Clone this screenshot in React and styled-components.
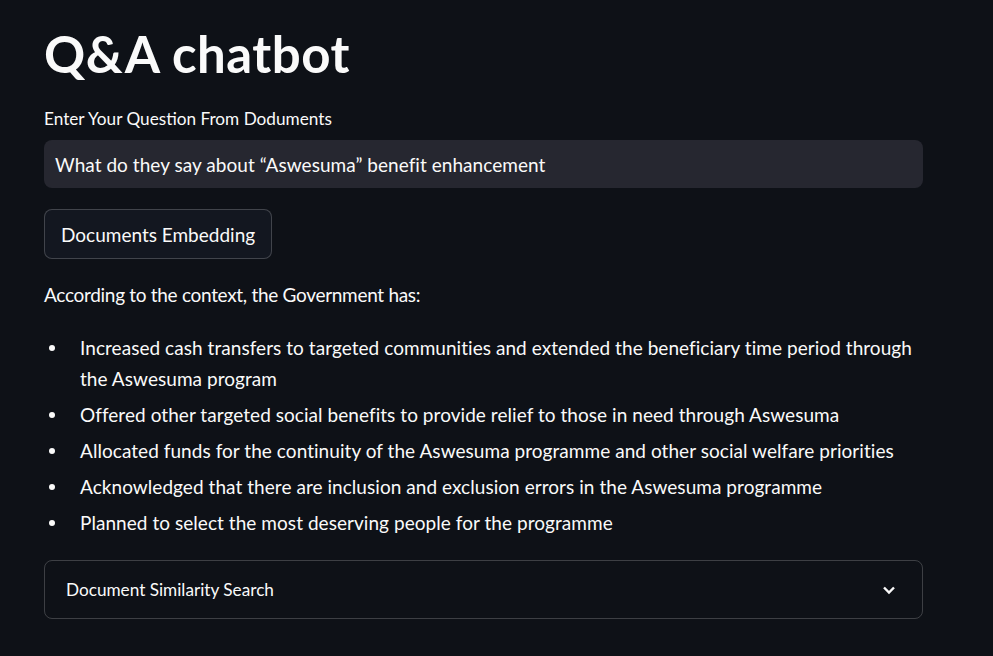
import styled, { createGlobalStyle } from "styled-components";

const GlobalStyle = createGlobalStyle`
  html, body {
    margin: 0;
    padding: 0;
    background: #0e1117;
    color: #fafafa;
    font-family: "Source Sans Pro", Lato, "Noto Sans", sans-serif;
  }
`;

const Page = styled.div`
  min-height: 656px;
  background: #0e1117;
  padding: 23px 0 0 44px;
  box-sizing: border-box;
`;

const Main = styled.div`
  width: 879px;
  display: flex;
  flex-direction: column;
`;

const Title = styled.h1`
  margin: 0;
  font-size: 51px;
  font-weight: 700;
  line-height: 62px;
  letter-spacing: 0.5px;
`;

const Label = styled.label`
  margin-top: 23px;
  font-size: 17.2px;
  line-height: 22px;
`;

const Input = styled.div`
  margin-top: 10px;
  height: 48px;
  border-radius: 8px;
  background: #262730;
  display: flex;
  align-items: center;
  padding: 0 11px;
  font-size: 19px;
  letter-spacing: 0.05px;
`;

const Button = styled.button`
  align-self: flex-start;
  margin-top: 21px;
  height: 50px;
  padding: 0 16px;
  border-radius: 8px;
  background: #131720;
  border: 1px solid rgba(250, 250, 250, 0.2);
  color: #fafafa;
  font-family: inherit;
  font-size: 19px;
`;

const Text = styled.p`
  margin: 20px 0 0;
  font-size: 19px;
  line-height: 31px;
  letter-spacing: -0.3px;
`;

const List = styled.ul`
  margin: 22px 0 0;
  padding: 0;
  list-style: none;
`;

const Item = styled.li`
  display: grid;
  grid-template-columns: 36px 1fr;
  font-size: 19px;
  line-height: 31px;
  letter-spacing: 0.05px;
  margin-bottom: 5px;
  &::before {
    content: "";
    width: 6px;
    height: 6px;
    border-radius: 50%;
    background: #fafafa;
    margin: 13px 0 0 5px;
  }
`;

const Expander = styled.div`
  margin-top: 17px;
  height: 59px;
  border: 1px solid rgba(250, 250, 250, 0.2);
  border-radius: 8px;
  display: flex;
  align-items: center;
  justify-content: space-between;
  padding: 0 26px 0 21px;
  box-sizing: border-box;
  font-size: 17.2px;
`;

const Chevron = () => (
  <svg width="14" height="10" viewBox="0 0 14 10">
    <polyline points="2,2.5 7,7.5 12,2.5" fill="none" stroke="#fafafa" strokeWidth="2.4" />
  </svg>
);

const items = [
  "Increased cash transfers to targeted communities and extended the beneficiary time period through the Aswesuma program",
  "Offered other targeted social benefits to provide relief to those in need through Aswesuma",
  "Allocated funds for the continuity of the Aswesuma programme and other social welfare priorities",
  "Acknowledged that there are inclusion and exclusion errors in the Aswesuma programme",
  "Planned to select the most deserving people for the programme",
];

const App = () => (
  <Page>
    <GlobalStyle />
    <Main>
      <Title>Q&amp;A chatbot</Title>
      <Label>Enter Your Question From Doduments</Label>
      <Input>What do they say about “Aswesuma” benefit enhancement</Input>
      <Button>Documents Embedding</Button>
      <Text>According to the context, the Government has:</Text>
      <List>
        {items.map((t) => (
          <Item key={t}>{t}</Item>
        ))}
      </List>
      <Expander>
        <span>Document Similarity Search</span>
        <Chevron />
      </Expander>
    </Main>
  </Page>
);

export default App;
